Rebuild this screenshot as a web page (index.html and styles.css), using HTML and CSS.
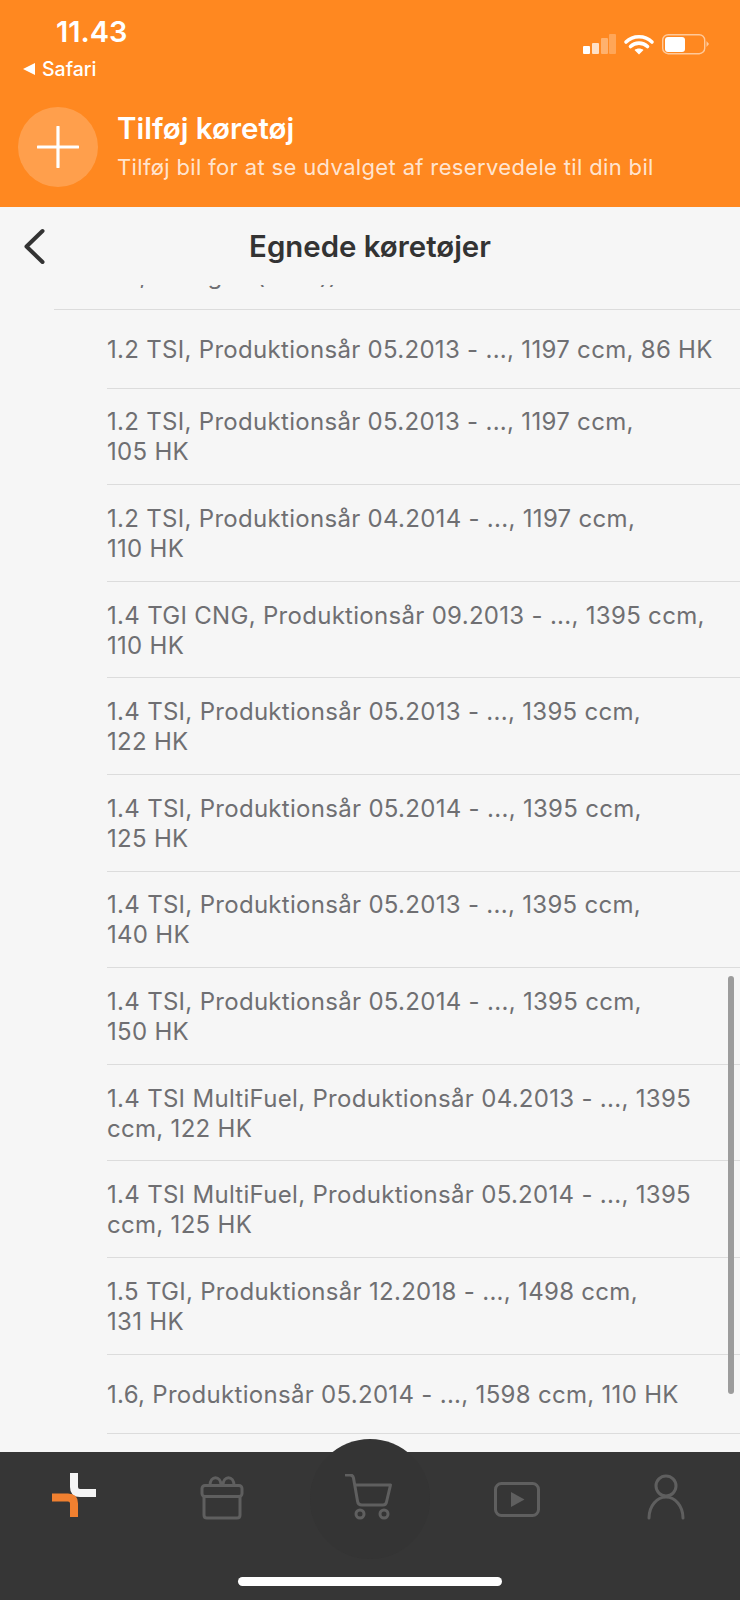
FILE: index.html
```html
<!DOCTYPE html>
<html lang="da">
<head>
    <meta charset="UTF-8">
    <meta name="viewport" content="width=device-width, initial-scale=1.0">
    <title>Egnede køretøjer</title>
    <link rel="stylesheet" href="styles.css">
</head>
<body>
    <div class="app">
        <div class="header">
            <div class="status">
                <div class="status-left">
                    <div class="time">11.43</div>
                    <div class="back-app"><span class="back-arrow"></span>Safari</div>
                </div>
                <svg class="status-icons" width="130" height="24" viewBox="0 0 130 24">
                    <rect x="3" y="12" width="7" height="8" rx="1" fill="#fff"/>
                    <rect x="12" y="9" width="7" height="11" rx="1" fill="#fff" opacity=".75"/>
                    <rect x="21" y="4" width="7" height="16" rx="1" fill="#fff" opacity=".35"/>
                    <rect x="29" y="0" width="7" height="20" rx="1" fill="#fff" opacity=".25"/>
                    <path d="M46 8 C53 1 65 1 72 8 M50.500 12.500 C55 8 63 8 67.500 12.500" fill="none" stroke="#fff" stroke-width="3.600" stroke-linecap="round"/>
                    <path d="M54.500 16 C57 14 61 14 63.500 16 L59 20.500 Z" fill="#fff"/>
                    <rect x="82.700" y="0.700" width="42" height="19" rx="5.500" fill="none" stroke="#fff" stroke-opacity=".55" stroke-width="1.400"/>
                    <rect x="85" y="3" width="20" height="15" rx="3" fill="#fff"/>
                    <path d="M126.500 7 L129 10 L126.500 13 Z" fill="#fff" opacity=".55"/>
                </svg>
            </div>
            <div class="add-car">
                <div class="add-circle">
                    <svg width="42" height="42" viewBox="0 0 42 42">
                        <path d="M21 1 V41 M1 21 H41" stroke="#fff" stroke-width="3.200" stroke-linecap="round"/>
                    </svg>
                </div>
                <div class="add-text">
                    <div class="add-title">Tilføj køretøj</div>
                    <div class="add-sub">Tilføj bil for at se udvalget af reservedele til din bil</div>
                </div>
            </div>
        </div>

        <div class="titlebar">
            <svg class="chevron" width="24" height="38" viewBox="0 0 24 38">
                <path d="M20.500 3 L4.500 18.500 L20.500 34" fill="none" stroke="#333" stroke-width="4" stroke-linecap="round" stroke-linejoin="round"/>
            </svg>
            <h1>Egnede køretøjer</h1>
        </div>

        <div class="main">
            <div class="list">
                <div class="row row-first">1.4, Autogas (CNG))</div>
                <div class="row row-single">1.2 TSI, Produktionsår 05.2013 - ..., 1197 ccm, 86&nbsp;HK</div>
                <div class="row">1.2 TSI, Produktionsår 05.2013 - ..., 1197 ccm, 105&nbsp;HK</div>
                <div class="row">1.2 TSI, Produktionsår 04.2014 - ..., 1197 ccm, 110&nbsp;HK</div>
                <div class="row">1.4 TGI CNG, Produktionsår 09.2013 - ..., 1395 ccm, 110&nbsp;HK</div>
                <div class="row">1.4 TSI, Produktionsår 05.2013 - ..., 1395 ccm, 122&nbsp;HK</div>
                <div class="row">1.4 TSI, Produktionsår 05.2014 - ..., 1395 ccm, 125&nbsp;HK</div>
                <div class="row">1.4 TSI, Produktionsår 05.2013 - ..., 1395 ccm, 140&nbsp;HK</div>
                <div class="row">1.4 TSI, Produktionsår 05.2014 - ..., 1395 ccm, 150&nbsp;HK</div>
                <div class="row">1.4 TSI MultiFuel, Produktionsår 04.2013 - ..., 1395 ccm, 122&nbsp;HK</div>
                <div class="row">1.4 TSI MultiFuel, Produktionsår 05.2014 - ..., 1395 ccm, 125&nbsp;HK</div>
                <div class="row">1.5 TGI, Produktionsår 12.2018 - ..., 1498 ccm, 131&nbsp;HK</div>
                <div class="row row-single">1.6, Produktionsår 05.2014 - ..., 1598 ccm, 110&nbsp;HK</div>
                <div class="row"></div>
            </div>
            <div class="scrollbar"></div>
        </div>

        <div class="nav">
            <div class="cart-bump"></div>
            <div class="nav-item">
                <svg width="46" height="48" viewBox="0 0 46 48">
                    <path d="M23 0 V14 Q23 20 29 20 H45" fill="none" stroke="#f4f4f4" stroke-width="8"/>
                    <path d="M1 24.500 H17 Q23 24.500 23 30.500 V44" fill="none" stroke="#f08030" stroke-width="8"/>
                </svg>
            </div>
            <div class="nav-item">
                <svg width="46" height="46" viewBox="0 0 46 46" fill="none" stroke="#5f5f5f" stroke-width="3" stroke-linejoin="round">
                    <rect x="3" y="11.500" width="40" height="11" rx="3"/>
                    <path d="M5 22.500 V41 Q5 44 8 44 H38 Q41 44 41 41 V22.500"/>
                    <path d="M11 11.500 C11 1 22 1 22 11.500 M24 11.500 C24 1 35 1 35 11.500"/>
                </svg>
            </div>
            <div class="nav-item">
                <svg width="50" height="46" viewBox="0 0 50 46" fill="none" stroke="#5f5f5f" stroke-width="3" stroke-linecap="round" stroke-linejoin="round">
                    <path d="M1 1 H5 Q8 1 8.500 4 L12.500 27 Q13 31 17 31 H38 Q41 31 41.500 28 L45.500 11 H10"/>
                    <circle cx="15" cy="40" r="4"/>
                    <circle cx="39" cy="40" r="4"/>
                </svg>
            </div>
            <div class="nav-item">
                <svg width="48" height="46" viewBox="0 0 48 46">
                    <rect x="1.500" y="9.500" width="43" height="32" rx="6" fill="none" stroke="#5f5f5f" stroke-width="3"/>
                    <path d="M17 18 L30.500 25.500 L17 33 Z" fill="#5f5f5f"/>
                </svg>
            </div>
            <div class="nav-item">
                <svg width="38" height="46" viewBox="0 0 38 46" fill="none" stroke="#5f5f5f" stroke-width="3" stroke-linecap="round">
                    <circle cx="19" cy="12" r="10"/>
                    <path d="M2 44 C2 32 10 23 19 23 C28 23 36 32 36 44"/>
                </svg>
            </div>
            <div class="home-bar"></div>
        </div>
    </div>
</body>
</html>
```

FILE: styles.css
```css
body {
    margin: 0;
    font-family: Inter, "Noto Sans", Arial, sans-serif;
    background-color: #f6f6f6;
}
.app {
    display: flex;
    flex-direction: column;
    width: 740px;
    height: 1600px;
    overflow: hidden;
}
.header {
    height: 207px;
    flex-shrink: 0;
    background-color: #ff8820;
    color: white;
}
.status {
    display: flex;
    justify-content: space-between;
    height: 107px;
}
.status-left {
    padding: 16px 0 0 23px;
}
.time {
    margin-left: 33px;
    font-size: 29px;
    line-height: 32px;
    font-weight: 600;
}
.back-app {
    display: flex;
    align-items: center;
    margin-top: 10px;
    font-size: 19.500px;
    line-height: 22px;
    font-weight: 500;
}
.back-arrow {
    width: 0;
    height: 0;
    margin-right: 7px;
    border-top: 6px solid transparent;
    border-bottom: 6px solid transparent;
    border-right: 12px solid white;
}
.status-icons {
    margin: 34px 30px 0 0;
}
.add-car {
    display: flex;
    align-items: center;
    padding-left: 18px;
}
.add-circle {
    display: flex;
    align-items: center;
    justify-content: center;
    width: 80px;
    height: 80px;
    border-radius: 50%;
    background-color: rgba(255, 255, 255, 0.2);
}
.add-text {
    margin-left: 19px;
}
.add-title {
    margin-top: -3px;
    font-size: 29.500px;
    line-height: 36px;
    font-weight: 600;
}
.add-sub {
    margin-top: 8px;
    font-size: 22px;
    line-height: 27px;
    letter-spacing: 0.35px;
    color: rgba(255, 255, 255, 0.8);
}
.titlebar {
    position: relative;
    box-sizing: border-box;
    height: 78px;
    padding-top: 2px;
    flex-shrink: 0;
    display: flex;
    align-items: center;
    justify-content: center;
}
.titlebar h1 {
    margin: 0;
    font-size: 29.400px;
    line-height: 36px;
    font-weight: 600;
    color: #333;
}
.chevron {
    position: absolute;
    left: 22px;
    top: 21px;
}
.main {
    position: relative;
    flex: 1;
    overflow: hidden;
}
.list {
    margin-top: -72px;
}
.row {
    box-sizing: border-box;
    height: 96.6px;
    display: flex;
    align-items: center;
    margin-left: 107px;
    padding-top: 2px;
    padding-right: 24px;
    border-bottom: 1px solid #dcdcdc;
    font-size: 24px;
    line-height: 30px;
    letter-spacing: 0.3px;
    color: #6f6f72;
}
.row-single {
    height: 79px;
}
.row-first {
    margin-left: 54px;
    padding-left: 53px;
    align-items: flex-end;
    padding-bottom: 18px;
}
.scrollbar {
    position: absolute;
    right: 6px;
    top: 691px;
    width: 6px;
    height: 418px;
    border-radius: 3px;
    background-color: #9c9c9c;
}
.nav {
    position: relative;
    height: 148px;
    flex-shrink: 0;
    display: grid;
    grid-template-columns: repeat(5, 148px);
    align-items: start;
    background-color: #363636;
}
.nav-item {
    position: relative;
    display: flex;
    justify-content: center;
    align-items: center;
    height: 46px;
    padding-top: 22px;
}
.cart-bump {
    position: absolute;
    left: 310px;
    top: -13px;
    width: 120px;
    height: 120px;
    border-radius: 50%;
    background-color: #343434;
}
.home-bar {
    position: absolute;
    left: 238px;
    top: 125px;
    width: 264px;
    height: 9px;
    border-radius: 5px;
    background-color: white;
}
```
